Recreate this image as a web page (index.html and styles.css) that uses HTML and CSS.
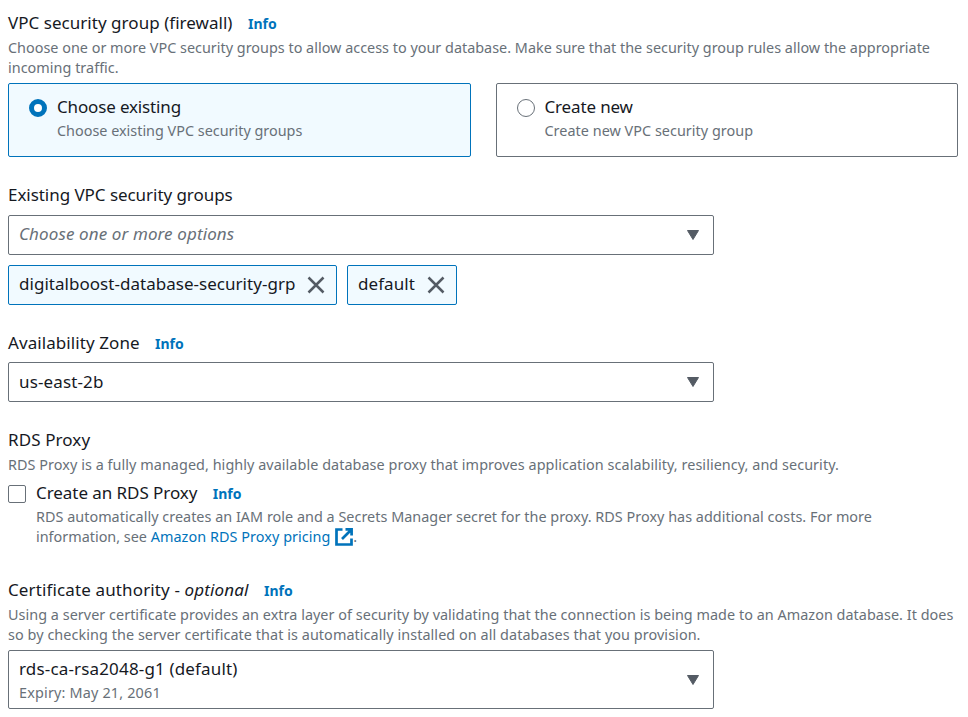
FILE: index.html
```html
<!DOCTYPE html>
<html lang="en">
<head>
<meta charset="utf-8">
<title>Connectivity settings</title>
<link rel="stylesheet" href="styles.css">
</head>
<body>
<main class="form">
  <section class="field field-firewall">
    <h2 class="label"><span class="t-firewall">VPC security group (firewall)</span> <a class="info">Info</a></h2>
    <p class="hint"><span class="h-firewall-1">Choose one or more VPC security groups to allow access to your database. Make sure that the security group rules allow the appropriate</span><br><span class="h-firewall-2">incoming traffic.</span></p>
    <div class="tiles">
      <div class="tile tile-selected">
        <span class="radio radio-on"></span>
        <div><div class="label"><span class="t-choose">Choose existing</span></div><p class="hint"><span class="h-choose">Choose existing VPC security groups</span></p></div>
      </div>
      <div class="tile">
        <span class="radio"></span>
        <div><div class="label"><span class="t-create">Create new</span></div><p class="hint"><span class="h-create">Create new VPC security group</span></p></div>
      </div>
    </div>
  </section>

  <section class="field field-groups">
    <h2 class="label"><span class="t-groups">Existing VPC security groups</span></h2>
    <div class="select"><span class="value placeholder t-placeholder">Choose one or more options</span><svg class="caret" viewBox="0 0 14 12"><path d="M1.5 1.5h11L7 10.5z"/></svg></div>
    <div class="tokens">
      <div class="token"><span class="value t-token-grp">digitalboost-database-security-grp</span><svg class="close" viewBox="0 0 18 18"><path d="M1.5 1.5l15 15M16.5 1.5l-15 15"/></svg></div>
      <div class="token"><span class="value t-token-default">default</span><svg class="close" viewBox="0 0 18 18"><path d="M1.5 1.5l15 15M16.5 1.5l-15 15"/></svg></div>
    </div>
  </section>

  <section class="field field-zone">
    <h2 class="label"><span class="t-zone">Availability Zone</span> <a class="info">Info</a></h2>
    <div class="select"><span class="value t-zone-value">us-east-2b</span><svg class="caret" viewBox="0 0 14 12"><path d="M1.5 1.5h11L7 10.5z"/></svg></div>
  </section>

  <section class="field field-proxy">
    <h2 class="label"><span class="t-proxy">RDS Proxy</span></h2>
    <p class="hint"><span class="h-proxy">RDS Proxy is a fully managed, highly available database proxy that improves application scalability, resiliency, and security.</span></p>
    <div class="check-row">
      <span class="checkbox"></span>
      <div>
        <div class="label"><span class="t-create-proxy">Create an RDS Proxy</span> <a class="info">Info</a></div>
        <p class="hint"><span class="h-role">RDS automatically creates an IAM role and a Secrets Manager secret for the proxy. RDS Proxy has additional costs. For more</span><br><span class="h-see">information, see</span> <a class="link"><span class="h-pricing">Amazon RDS Proxy pricing</span> <svg class="external" viewBox="0 0 18 18"><path d="M7.5 1.5H1.5v15h15V10.5M10.5 1.4h6.1v6.1M16 2L7 11"/></svg></a>.</p>
      </div>
    </div>
  </section>

  <section class="field field-ca">
    <h2 class="label"><span class="t-ca">Certificate authority - <i>optional</i></span> <a class="info">Info</a></h2>
    <p class="hint"><span class="h-ca-1">Using a server certificate provides an extra layer of security by validating that the connection is being made to an Amazon database. It does</span><br><span class="h-ca-2">so by checking the server certificate that is automatically installed on all databases that you provision.</span></p>
    <div class="select select-tall"><div class="option"><div class="label"><span class="t-ca-value">rds-ca-rsa2048-g1 (default)</span></div><p class="hint"><span class="h-expiry">Expiry: May 21, 2061</span></p></div><svg class="caret" viewBox="0 0 14 12"><path d="M1.5 1.5h11L7 10.5z"/></svg></div>
  </section>
</main>
</body>
</html>
```
FILE: styles.css
```css
* { box-sizing: border-box; }
body {
  margin: 0;
  background: #fff;
  color: #16191f;
  font-family: "Noto Sans", sans-serif;
  font-size: 17px;
}
h2, p { margin: 0; }
.form { padding: 11px 10px 0 8px; }
.label { font-size: 17px; font-weight: 400; line-height: 24px; white-space: nowrap; }
.hint { color: #687078; font-size: 14.4px; line-height: 20px; white-space: nowrap; }
.info { margin-left: 11px; color: #0073bb; font-size: 14px; font-weight: 700; }
.link { color: #0073bb; }

.field-firewall > .hint { margin-top: 2px; }
.tiles { display: grid; grid-template-columns: 463px 462px; gap: 25px; margin-top: 5px; }
.tile { display: flex; gap: 10px; height: 74px; padding: 11px 20px; border: 1px solid #687078; border-radius: 2px; }
.tile:last-child { padding-left: 19.5px; }
.tile .hint { margin-top: 2px; }
.tile-selected { border-color: #0073bb; background: #f1faff; }
.radio { width: 18px; height: 18px; margin-top: 4px; border: 1px solid #687078; border-radius: 50%; background: #fff; }
.radio-on { border: 5px solid #0073bb; }

.select { display: flex; align-items: center; justify-content: space-between; width: 706px; height: 40px; padding: 0 13px 0 10px; border: 1px solid #687078; border-radius: 2px; }
.value { padding-bottom: 4px; }
.field-zone .value { padding-bottom: 2px; }
.placeholder { color: #687078; font-style: italic; }
.caret { width: 14px; height: 12px; fill: #545b64; stroke: #545b64; stroke-linejoin: round; }
.select-tall { height: 59px; margin-top: 5px; }
.option .hint { margin-top: 2px; }

.field-groups { margin-top: 26px; }
.field-groups .select { margin-top: 8px; }
.tokens { display: flex; gap: 10px; margin-top: 10px; }
.token { display: flex; align-items: center; justify-content: space-between; width: 329px; height: 40px; padding: 0 11px 0 10px; border: 1px solid #0073bb; border-radius: 2px; background: #f1faff; }
.token:last-child { width: 110px; }
.close { width: 18px; height: 18px; margin-bottom: 1px; fill: none; stroke: #545b64; stroke-width: 2.5; }

.field-zone { margin-top: 26px; }
.field-zone .select { margin-top: 6px; }
.field-proxy { margin-top: 26px; }
.field-proxy > .hint { margin-top: 3px; }
.check-row { display: flex; gap: 10px; margin-top: 6px; }
.check-row .hint { margin-top: 1px; }
.checkbox { width: 18px; height: 18px; margin-top: 4px; border: 1px solid #687078; border-radius: 2px; }
.external { display: inline-block; width: 18px; height: 18px; margin-left: 1px; vertical-align: -4px; fill: none; stroke: #0073bb; stroke-width: 2.7; }
.field-ca { margin-top: 31px; }
.field-ca > .hint { margin-top: 2px; }

/* Tracking for each line of copy */
.t-firewall { letter-spacing: .034px; }
.t-choose, .t-create { letter-spacing: -.15px; }
.t-groups { letter-spacing: -.05px; }
.t-placeholder { letter-spacing: .115px; }
.t-token-grp { letter-spacing: .03px; }
.t-token-default { letter-spacing: .07px; }
.t-zone { letter-spacing: .08px; }
.t-zone-value, .t-ca { letter-spacing: .13px; }
.t-proxy { letter-spacing: .1px; }
.t-create-proxy { letter-spacing: -.06px; }
.t-ca-value { letter-spacing: .16px; }
.h-firewall-1 { letter-spacing: .007px; }
.h-firewall-2, .h-create { letter-spacing: .03px; }
.h-proxy { letter-spacing: .056px; }
.h-role { letter-spacing: .022px; }
.h-pricing { letter-spacing: .06px; }
.h-ca-1 { letter-spacing: .038px; }
.h-ca-2 { letter-spacing: .066px; }
.h-expiry { letter-spacing: .18px; }
```
